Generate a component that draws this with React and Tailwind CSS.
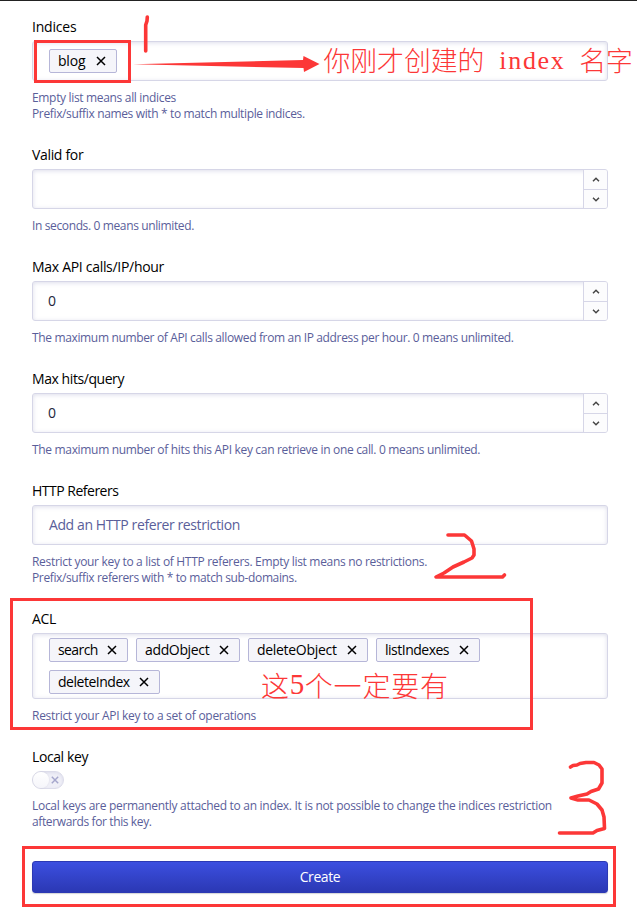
const SANS = "font-['Open_Sans','Noto_Sans',sans-serif]";

function Cross({ className }) {
  return (
    <svg viewBox="0 0 10 10" className={className} fill="none" stroke="currentColor">
      <path d="M1 1 L9 9 M9 1 L1 9" />
    </svg>
  );
}

function Chip({ label, width, tracking }) {
  return (
    <span
      className={`flex h-6 shrink-0 items-center rounded-[2px] border border-[#b6b6d8] bg-[#f5f5fa] pl-[8px] text-sm text-black ${width}`}
    >
      <span className={`flex-1 whitespace-nowrap ${tracking}`}>{label}</span>
      <Cross className="mr-[10px] size-[10px] stroke-[1.5]" />
    </span>
  );
}

function Label({ children, tracking }) {
  return (
    <div className={`mb-1 h-5 text-sm leading-5 whitespace-nowrap text-black ${tracking}`}>
      {children}
    </div>
  );
}

function Help({ lines }) {
  return (
    <div className="mt-[9px] mb-[23px] text-xs leading-4 whitespace-nowrap text-[#5a5e9a]">
      {lines.map(([text, tracking]) => (
        <div key={text} className={tracking}>
          {text}
        </div>
      ))}
    </div>
  );
}

const BOX =
  "flex rounded-[3px] border border-[#d6d6e7] bg-white shadow-[inset_0_1px_4px_rgba(119,122,175,0.25)]";

function Chevron({ down }) {
  return (
    <svg viewBox="0 0 8 5" className="h-[5px] w-2" fill="none" stroke="#484848" strokeWidth="1.5">
      <path d={down ? "M1 0.8 L4 3.8 L7 0.8" : "M1 4.2 L4 1.2 L7 4.2"} />
    </svg>
  );
}

function NumberBox({ value }) {
  return (
    <div className={`${BOX} h-10`}>
      <div className="flex flex-1 items-center pl-[15px] text-sm text-[#23263b]">{value}</div>
      <div className="flex w-6 flex-col overflow-hidden rounded-r-[2px] border-l border-[#d6d6e7] bg-[#fcfcfd]">
        <div className="flex h-5 items-center justify-center border-b border-[#d6d6e7]">
          <Chevron />
        </div>
        <div className="flex flex-1 items-center justify-center">
          <Chevron down />
        </div>
      </div>
    </div>
  );
}

function Annotations() {
  return (
    <div className="pointer-events-none absolute inset-x-0 -top-px h-[923px] text-[#fc3737]">
      <div className="absolute top-[40px] left-[34px] h-[43px] w-[97px] border-3 border-[#fc3737]" />
      <div className="absolute top-[598px] left-[10px] h-[132px] w-[523px] border-3 border-[#fc3737]" />
      <div className="absolute top-[846px] left-[22px] h-[61px] w-[594px] border-3 border-[#fc3737]" />
      <svg
        className="absolute inset-0"
        width="637"
        height="923"
        fill="none"
        stroke="#fc3737"
        strokeWidth="3.6"
        strokeLinecap="round"
        strokeLinejoin="round"
      >
        <path d="M147.3 17 L147 21 L145.7 25 L145.7 51" />
        <path d="M133 64.3 L303 60 L303.5 56 L319.5 64 L304 72 L303.5 68 Z" fill="#fc3737" stroke="none" />
        <path d="M448 535 H464.5 L468 538 L471.5 541 L474 549 L474 555 L472 558 L464 562 L453 567 L444 573 L436 577 H502.5 L504.5 575" />
        <path d="M570.5 767 L573 765.5 L577 765 L580 763.5 L586 762.5 H594 L599 765 L602 769 V783 L598.5 789 L591 791.5 L587 794 L578 796 L571 798 L578 800 H589 L597 804 L602 810 L604 817 L604.5 828.5 L597 830.5 L593 833 H559.5" />
      </svg>
      <div className="absolute top-[40px] left-[323.5px] flex h-10 items-center font-['Noto_Sans_CJK_SC',sans-serif] text-[26.8px] font-light whitespace-nowrap">
        <span>你刚才创建的</span>
        <span className="w-[95px] pl-[15px] font-['Liberation_Serif',serif] text-[26px] tracking-[1.7px]">
          index
        </span>
        <span>名字</span>
      </div>
      <div className="absolute top-[665px] left-[261px] flex h-10 items-center font-['Noto_Sans_CJK_SC',sans-serif] text-[28px] font-light tracking-[0.8px] whitespace-nowrap">
        <span>这</span>
        <span className="w-[15px] font-['Liberation_Serif',serif] text-[29px]">5</span>
        <span>个一定要有</span>
      </div>
    </div>
  );
}

export default function App() {
  return (
    <div className={`relative h-[923px] w-[637px] overflow-hidden border-t border-[#222] bg-white ${SANS}`}>
      <form className="flex flex-col pt-4 pr-[29px] pl-8">
        <Label tracking="tracking-[-0.2px]">Indices</Label>
        <div className={`${BOX} h-10 items-start pt-[7px] pl-4`}>
          <Chip label="blog" width="w-[68px]" tracking="tracking-[-0.2px]" />
        </div>
        <Help
          lines={[
            ["Empty list means all indices", "tracking-[-0.33px]"],
            ["Prefix/suffix names with * to match multiple indices.", "tracking-[-0.36px]"],
          ]}
        />

        <Label tracking="tracking-[-0.33px]">Valid for</Label>
        <NumberBox value="" />
        <Help lines={[["In seconds. 0 means unlimited.", "tracking-[-0.37px]"]]} />

        <Label tracking="tracking-[-0.3px]">Max API calls/IP/hour</Label>
        <NumberBox value="0" />
        <Help
          lines={[
            [
              "The maximum number of API calls allowed from an IP address per hour. 0 means unlimited.",
              "tracking-[-0.35px]",
            ],
          ]}
        />

        <Label tracking="tracking-[-0.43px]">Max hits/query</Label>
        <NumberBox value="0" />
        <Help
          lines={[
            [
              "The maximum number of hits this API key can retrieve in one call. 0 means unlimited.",
              "tracking-[-0.325px]",
            ],
          ]}
        />

        <Label tracking="tracking-[-0.5px]">HTTP Referers</Label>
        <div className={`${BOX} h-10 items-center pl-4 text-sm text-[#5a5e9a]`}>
          <span className="tracking-[-0.4px]">Add an HTTP referer restriction</span>
        </div>
        <Help
          lines={[
            [
              "Restrict your key to a list of HTTP referers. Empty list means no restrictions.",
              "tracking-[-0.31px]",
            ],
            ["Prefix/suffix referers with * to match sub-domains.", "tracking-[-0.37px]"],
          ]}
        />

        <Label tracking="tracking-[-0.3px]">ACL</Label>
        <div className={`${BOX} h-[66px] flex-wrap content-start gap-2 pt-1 pr-20 pl-4`}>
          <Chip label="search" width="w-[79px]" tracking="tracking-[-0.6px]" />
          <Chip label="addObject" width="w-[104px]" tracking="tracking-[-0.35px]" />
          <Chip label="deleteObject" width="w-[120px]" tracking="tracking-[-0.3px]" />
          <Chip label="listIndexes" width="w-[104px]" tracking="tracking-[-0.5px]" />
          <Chip label="deleteIndex" width="w-[111px]" tracking="tracking-[-0.48px]" />
        </div>
        <Help lines={[["Restrict your API key to a set of operations", "tracking-[-0.28px]"]]} />

        <Label tracking="tracking-[-0.4px]">Local key</Label>
        <div className="flex h-[18px] w-8 items-center justify-between rounded-full border border-[#dcdcea] bg-[#efeff7] pr-1 shadow-[inset_0_1px_3px_rgba(119,122,175,0.15)]">
          <span className="size-4 rounded-full bg-linear-to-b from-white to-[#f5f5fa] shadow-[0_0_2px_rgba(35,38,59,0.1)]" />
          <Cross className="size-2 stroke-[1.8] text-[#a5a6cc]" />
        </div>
        <Help
          lines={[
            [
              "Local keys are permanently attached to an index. It is not possible to change the indices restriction",
              "tracking-[-0.295px]",
            ],
            ["afterwards for this key.", "tracking-[-0.38px]"],
          ]}
        />

        <button
          type="button"
          className="mt-2 h-8 rounded-[3px] border border-[#2c39b4] bg-linear-to-b from-[#3c4fe0] to-[#2b38b4] text-sm tracking-[-0.4px] text-white shadow-[0_1px_1px_rgba(35,38,59,0.2)]"
        >
          Create
        </button>
      </form>
      <Annotations />
    </div>
  );
}
